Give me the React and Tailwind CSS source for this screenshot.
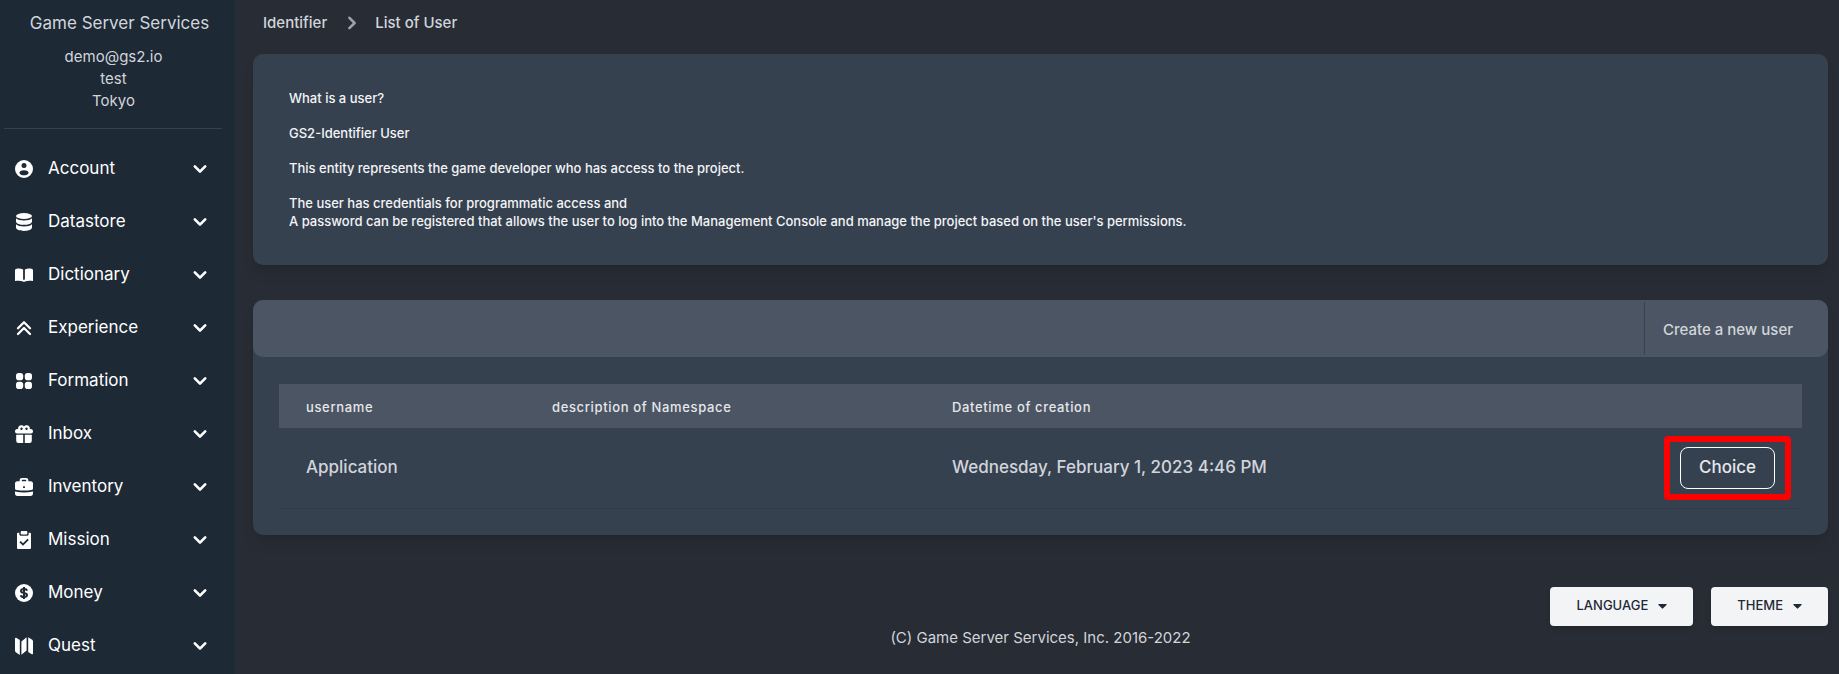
import { useState } from 'react';

function Icon({ children }) {
  return (
    <svg width="18" height="18" viewBox="0 0 18 18" fill="currentColor" className="shrink-0">
      {children}
    </svg>
  );
}

const icons = {
  account: (
    <path fillRule="evenodd" d="M9 0a9 9 0 1 1 0 18A9 9 0 0 1 9 0zm0 3a2.500 2.500 0 1 0 0 5 2.500 2.500 0 0 0 0-5zM9 10.200c-2.600 0-4.700 1.200-4.700 2.700C5 14.600 7 15.300 9 15.300s4-.7 4.700-2.400c0-1.500-2.100-2.700-4.700-2.700z" />
  ),
  datastore: (
    <>
      <ellipse cx="9" cy="3" rx="8" ry="3" />
      <path d="M1 5.200C2.500 6.700 5.500 7.400 9 7.400s6.500-.7 8-2.200v3.200c0 1.900-3.600 3.400-8 3.400S1 10.300 1 8.400z" />
      <path d="M1 11.200c1.500 1.500 4.500 2.200 8 2.200s6.500-.7 8-2.200v3.400c0 1.900-3.600 3.400-8 3.400s-8-1.500-8-3.400z" />
    </>
  ),
  dictionary: (
    <path d="M0 4c0-.6.300-.9.900-1.100C3.200 2.400 6 2.400 8.100 3.400V13c0 .5.400.9.900.9s.9-.4.900-.9V3.400c2.100-1 4.900-1 7.200-.5.600.2.900.5.900 1.100v11.100c-2.500-.6-5.300-.6-7.500.1-.5.700-2.500.7-3 0-2.200-.7-5-.7-7.500-.1z" />
  ),
  experience: (
    <path d="M3 9.200 9 3.200l6 6M3 15l6-6 6 6" fill="none" stroke="currentColor" strokeWidth="2.300" strokeLinecap="round" strokeLinejoin="round" />
  ),
  formation: (
    <>
      <rect x="1" y="1" width="7.200" height="7.200" rx="2.800" />
      <rect x="9.800" y="1" width="7.200" height="7.200" rx="2.800" />
      <rect x="1" y="9.800" width="7.200" height="7.200" rx="2.800" />
      <rect x="9.800" y="9.800" width="7.200" height="7.200" rx="2.800" />
    </>
  ),
  inbox: (
    <>
      <path fillRule="evenodd" d="M6.300.2C7.500.2 8.400.8 9 1.300c.6-.5 1.500-1.100 2.700-1.100 2 0 3.400 1.500 3.200 3.800h.9c1.300 0 2.200 1 2.200 2.200 0 1.300-.9 2.300-2.200 2.300H2.200C.9 8.500 0 7.500 0 6.200 0 5 .9 4 2.200 4h.9C2.900 1.700 4.300.2 6.300.2zm.2 2.300a1.200 1.200 0 1 0 0 2.400 1.200 1.200 0 0 0 0-2.400zm5 0a1.200 1.200 0 1 0 0 2.400 1.200 1.200 0 0 0 0-2.400z" />
      <path d="M1.200 9.800h7V18H3.400a2.200 2.200 0 0 1-2.200-2.200zM9.800 9.800h7v6a2.200 2.200 0 0 1-2.200 2.200H9.800z" />
    </>
  ),
  inventory: (
    <>
      <path fillRule="evenodd" d="M6.800 0h4.400c1.200 0 2.100.9 2.100 2.100v1.100h2.500c1.200 0 2.200 1 2.200 2.200v4.800c0 1-.6 1.600-1.500 1.700-5 .9-10 .9-15 0C.6 11.800 0 11.200 0 10.200V5.400c0-1.200 1-2.200 2.200-2.200h2.500V2.100C4.700.9 5.600 0 6.800 0zm0 1.700v1.500h4.400V1.700zM8.100 8.200V10h1.800V8.200z" />
      <path d="M0 13.500c6 1.300 12 1.300 18 0v2.300c0 1.200-1 2.200-2.200 2.200H2.200C1 18 0 17 0 15.800z" />
    </>
  ),
  mission: (
    <>
      <path fillRule="evenodd" d="M3.300 1.800h1V3c0 1 .8 1.800 1.800 1.800h5.800c1 0 1.800-.8 1.800-1.800V1.800h1c.8 0 1.300.5 1.300 1.300v13.600c0 .8-.5 1.300-1.300 1.300H3.300c-.8 0-1.300-.5-1.300-1.300V3.100c0-.8.500-1.300 1.300-1.300zM5.700 10l-1.300 1.300 3.600 3.500 5.800-5.700L12.500 7.800 8 12.200z" />
      <rect x="5.700" y="0" width="6.600" height="3.500" rx="1" />
    </>
  ),
  money: (
    <>
      <circle cx="9" cy="9" r="9" />
      <path d="M12 6.700C11.700 5.400 10.600 5 9 5c-1.800 0-3 .7-3 2s1.200 1.700 3 2 3 .8 3 2-1.200 2-3 2-2.900-.5-3.200-1.800M9 3v12" fill="none" stroke="#1f2937" strokeWidth="2" />
    </>
  ),
  quest: (
    <path d="M0 1.500c0-.8.600-1 1.200-.7L4.800 3v15L.8 15.300a2 2 0 0 1-.8-1.500zM6.400 4.500 11.600.3v13.200L6.400 17.700zM13.200.3l4 2.400a2 2 0 0 1 .8 1.600v12.200c0 .8-.6 1-1.200.7l-3.600-2.200z" />
  ),
};

const services = [
  { label: 'Account', icon: 'account' },
  { label: 'Datastore', icon: 'datastore' },
  { label: 'Dictionary', icon: 'dictionary' },
  { label: 'Experience', icon: 'experience' },
  { label: 'Formation', icon: 'formation' },
  { label: 'Inbox', icon: 'inbox' },
  { label: 'Inventory', icon: 'inventory' },
  { label: 'Mission', icon: 'mission' },
  { label: 'Money', icon: 'money' },
  { label: 'Quest', icon: 'quest' },
];

const users = [
  { name: 'Application', description: '', createdAt: 'Wednesday, February 1, 2023 4:46 PM' },
];

function Chevron({ className }) {
  return (
    <svg width="26" height="26" viewBox="0 0 20 20" fill="currentColor" className={className}>
      <path fillRule="evenodd" clipRule="evenodd" d="M5.293 7.293a1 1 0 011.414 0L10 10.586l3.293-3.293a1 1 0 111.414 1.414l-4 4a1 1 0 01-1.414 0l-4-4a1 1 0 010-1.414z" />
    </svg>
  );
}

function Caret() {
  return (
    <svg width="9" height="5" viewBox="0 0 320 180" fill="currentColor">
      <path d="M31.3 0h257.300c17.800 0 26.700 21.500 14.100 34.100L174.100 162.800c-7.800 7.800-20.500 7.800-28.300 0L17.200 34.100C4.600 21.500 13.500 0 31.300 0z" />
    </svg>
  );
}

function Sidebar() {
  const [open, setOpen] = useState(null);

  return (
    <aside className="w-[235px] shrink-0 bg-[#1e2936] text-[#d1d5db]">
      <h1 className="pt-[11px] pl-1 text-center text-[17px] leading-6">Game Server Services</h1>
      <div className="mt-[11px] pr-2 text-center text-[15px] leading-[22px]">
        <p>demo@gs2.io</p>
        <p>test</p>
        <p>Tokyo</p>
      </div>
      <hr className="mt-4 mr-[13px] ml-1 border-[#374151]" />
      <nav className="pt-[13px]">
        {services.map(({ label, icon }) => (
          <button
            key={label}
            type="button"
            aria-expanded={open === label}
            onClick={() => setOpen(open === label ? null : label)}
            className="flex h-[53px] w-full items-center pr-[22px] pl-[15px] text-white"
          >
            <Icon>{icons[icon]}</Icon>
            <span className="ml-[15px] flex-1 text-left text-[17px]">{label}</span>
            <Chevron />
          </button>
        ))}
      </nav>
    </aside>
  );
}

function Breadcrumb() {
  return (
    <nav className="flex h-[46px] items-center pl-2.5 text-[15px] font-medium text-[#d1d5db]">
      <a href="#identifier">Identifier</a>
      <Chevron className="mr-2.5 ml-3 -rotate-90 text-[#9ca3af]" />
      <a href="#users">List of User</a>
    </nav>
  );
}

function About() {
  return (
    <section className="space-y-[17px] rounded-[10px] bg-[#364150] px-9 pt-[35px] pb-[35px] text-[13px] leading-[18px] font-medium text-[#f3f4f6] shadow-lg">
      <p>What is a user?</p>
      <p>GS2-Identifier User</p>
      <p>This entity represents the game developer who has access to the project.</p>
      <p>
        The user has credentials for programmatic access and
        <br />
        A password can be registered that allows the user to log into the Management Console and manage the project based on the user's permissions.
      </p>
    </section>
  );
}

function UserList() {
  return (
    <section className="mt-[35px] rounded-[10px] bg-[#364150] shadow-lg">
      <div className="flex h-[57px] justify-end rounded-[10px] bg-[#4c5563] py-0.5">
        <button type="button" className="border-l border-[#374151] pt-1 pr-[35px] pl-[18px] text-[15px] font-medium text-[#d1d5db]">
          Create a new user
        </button>
      </div>
      <div className="px-[26px] pt-[27px] pb-[26px]">
        <table className="w-full table-fixed text-left font-medium">
          <thead className="bg-[#4c5563] text-[13px] text-[#e5e7eb]">
            <tr className="h-11">
              <th className="w-[246px] pt-[3px] pl-[27px] font-medium tracking-wider">username</th>
              <th className="w-[400px] pt-[3px] pl-[27px] font-medium tracking-wider">description of Namespace</th>
              <th className="pt-[3px] pl-[27px] font-medium tracking-wider">Datetime of creation</th>
              <th className="w-[200px]" aria-label="Actions" />
            </tr>
          </thead>
          <tbody className="text-[17px] text-[#d1d5db]">
            {users.map(user => (
              <tr key={user.name} className="h-20 border-b border-[#323b4a]">
                <td className="pl-[27px]">{user.name}</td>
                <td className="pl-[27px]">{user.description}</td>
                <td className="pl-[27px]">{user.createdAt}</td>
                <td className="pr-[11px] text-right">
                  <div className="inline-flex rounded-[4px] border-6 border-[#ff0000] px-[10px] py-[5px]">
                    <button type="button" className="h-[42px] rounded-lg border border-white px-[18px] text-[#e5e7eb]">
                      Choice
                    </button>
                  </div>
                </td>
              </tr>
            ))}
          </tbody>
        </table>
      </div>
    </section>
  );
}

function Footer() {
  return (
    <footer className="mt-[52px]">
      <div className="flex justify-end gap-[18px] text-[13px] font-medium text-[#1f2937]">
        <button type="button" className="flex h-[39px] items-center gap-2.5 rounded-[4px] bg-[#f3f4f6] px-[26px] shadow-md">
          LANGUAGE <Caret />
        </button>
        <button type="button" className="flex h-[39px] items-center gap-2.5 rounded-[4px] bg-[#f3f4f6] px-[26px] shadow-md">
          THEME <Caret />
        </button>
      </div>
      <p className="text-center text-[15px] leading-6 text-[#d1d5db]">(C) Game Server Services, Inc. 2016-2022</p>
    </footer>
  );
}

export default function App() {
  return (
    <div className="flex h-screen overflow-hidden bg-[#282c34] font-['Inter','Liberation_Sans',sans-serif]">
      <Sidebar />
      <main className="flex-1 pr-[11px] pl-[18px]">
        <Breadcrumb />
        <div className="pt-2">
          <About />
          <UserList />
        </div>
        <Footer />
      </main>
    </div>
  );
}
